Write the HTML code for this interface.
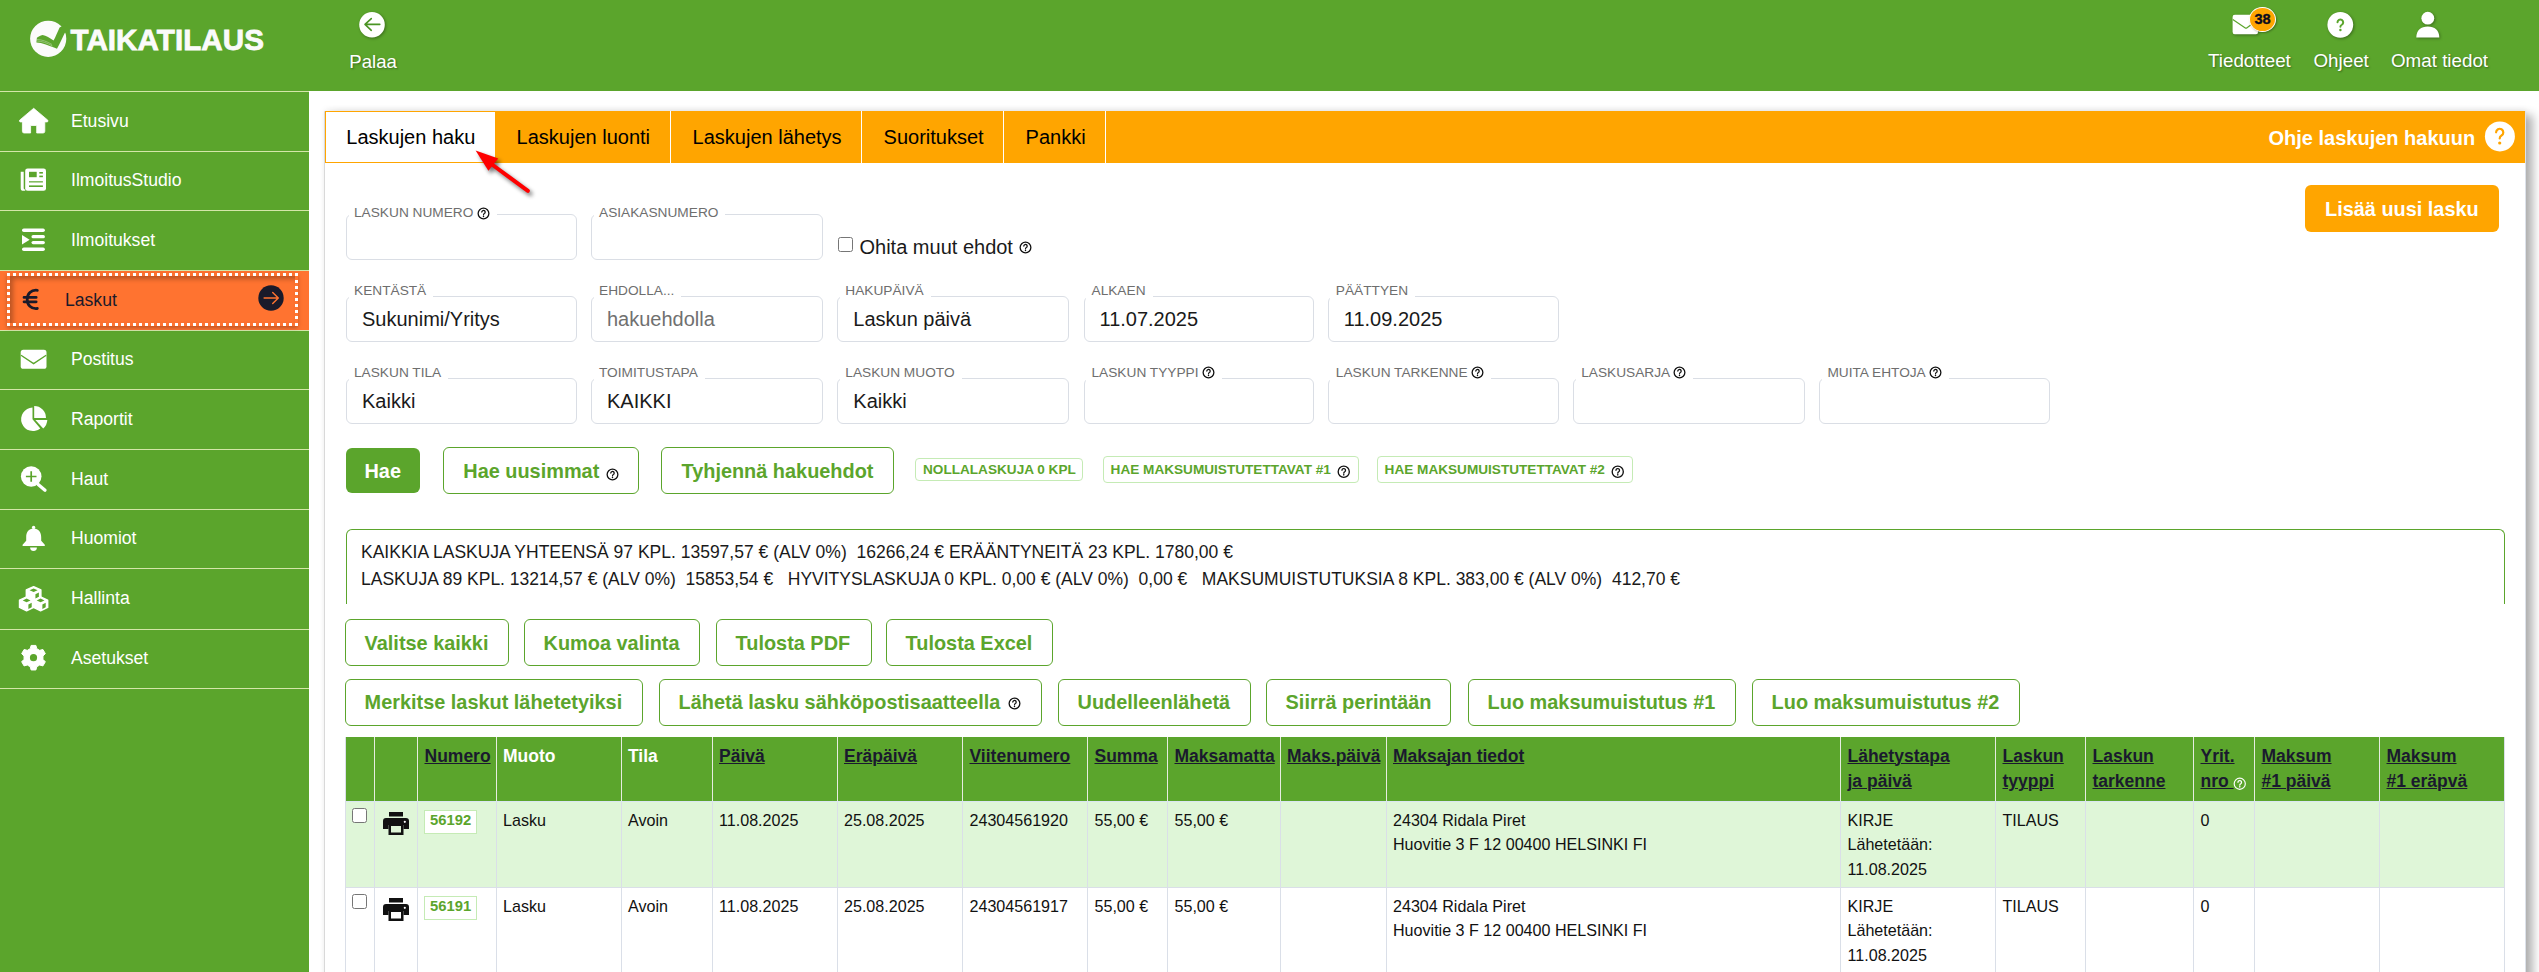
<!DOCTYPE html>
<html><head><meta charset="utf-8">
<style>
*{box-sizing:border-box}
html,body{margin:0;padding:0}
body{width:2539px;height:972px;overflow:hidden;position:relative;background:#fff;font-family:"Liberation Sans",sans-serif;color:#222}
.abs{position:absolute}
.tx{white-space:pre}
#hdr{position:absolute;left:0;top:0;width:2539px;height:91px;background:#5ba52c}
#side{position:absolute;left:0;top:91px;width:309px;height:881px;background:#5ba52c}
.sl{position:absolute;left:0;width:309px;height:1px;background:#d4e6a8}
.hs{text-shadow:1px 1px 2px rgba(0,0,0,.35);color:#fff}
#panel{position:absolute;left:324px;top:111px;width:2202px;height:900px;background:#fff;box-shadow:7px 4px 9px rgba(0,0,0,.3), 0 -2px 6px rgba(0,0,0,.05);border:1px solid #dde2ea;border-left-color:#d9d9d9}
#tabs{position:absolute;left:325px;top:111px;width:2200px;height:51.5px;background:#ffa500;display:flex}
.tab{height:51.5px;line-height:53px;padding:0 0 0 21.4px;font-size:20px;color:#000;border-right:1px solid #fff;white-space:nowrap}
.tab.act{background:#fff;border:1px solid #ffa500;border-right:none;padding-left:20.3px;line-height:51px;width:170.2px}
.fld{position:absolute;width:231px;height:46px;border:1px solid #dadee5;border-radius:6px;background:#fff}
.fld .lb{position:absolute;left:1.5px;top:-14.5px;background:#fff;padding:0 7px 0 5.5px;font-size:13.7px;color:#6e6e6e;line-height:16px;height:16px;white-space:nowrap}
.fld .v{position:absolute;left:15px;top:0;line-height:44px;font-size:20px;color:#1a1a1a;white-space:nowrap}
.fld .v.ph{color:#707070}
.btn{position:absolute;height:46.5px;border:1px solid #5ba52c;border-radius:6px;color:#5ba52c;font-weight:bold;font-size:19.9px;line-height:44.5px;padding:0 19px;white-space:nowrap;background:#fff}
.sbtn{position:absolute;border:1px solid #c5ebb5;border-radius:4px;color:#5ba52c;font-weight:bold;font-size:13.6px;white-space:nowrap;background:#fff}
#sum{position:absolute;left:345.5px;top:529px;width:2159px;height:75px;border:1px solid #5ba52c;border-bottom:none;border-radius:6px 6px 0 0;}
.hl{position:absolute;height:1px;background:#dadfe8}
.vl{position:absolute;width:1px;background:#dadfe8}
.th{font-weight:bold;color:#1a1a2e;text-decoration:underline;text-decoration-thickness:1.2px;text-underline-offset:0.6px}
.td{color:#111}
</style></head><body>
<div id="hdr"></div>
<div id="side"></div>

<svg class="abs" style="left:26px;top:17px" width="46" height="44" viewBox="0 0 46 44">
<circle cx="22.2" cy="21.8" r="18.1" fill="#fbfbfb"/>
<path d="M35.3 9.5 L33.6 10.4 C31.2 15.5 29.6 19.6 27.6 23.6 C24 21 20 18.4 16.6 18 C14.2 18.4 12.2 19.8 10.9 20.7 L10.4 25.6 C16 25.8 23 28.6 31 31.8 C34 26.8 36.2 20.8 38.9 15.8 L42 15 L42 8 Z" fill="#5ba52c"/>
<path d="M11 22.5 C16 22.6 21 24.5 26 27.5 M11 24 C16 24.2 21 26 26.5 29" stroke="#cfe6bd" stroke-width=".6" fill="none" opacity=".8"/>
</svg>
<div class="abs tx " style="left:70.5px;top:25.24px;font-size:29.6px;line-height:29.6px;font-weight:bold;color:#fbfbfb;letter-spacing:0.05px;-webkit-text-stroke:0.8px #fbfbfb;">TAIKATILAUS</div>
<svg class="abs" style="left:358px;top:11px;filter:drop-shadow(1px 1px 1.5px rgba(0,0,0,.35))" width="28" height="28" viewBox="0 0 28 28">
<circle cx="14" cy="13.8" r="12.8" fill="#fff"/>
<path d="M21.8 13.4 H7.2 M13.3 7.6 L7 13.4 L13.3 19.3" stroke="#4a9424" stroke-width="1.6" fill="none" stroke-linecap="round" stroke-linejoin="round"/>
</svg>
<div class="abs tx hs" style="left:349.3px;top:52.56px;font-size:18.6px;line-height:18.6px;">Palaa</div>
<div class="abs tx hs" style="left:2208px;top:52.39px;font-size:18.8px;line-height:18.8px;">Tiedotteet</div>
<div class="abs tx hs" style="left:2313.5px;top:52.39px;font-size:18.8px;line-height:18.8px;">Ohjeet</div>
<div class="abs tx hs" style="left:2391px;top:52.39px;font-size:18.8px;line-height:18.8px;">Omat tiedot</div>
<svg class="abs" style="left:2230px;top:5px;filter:drop-shadow(1px 1px 1.5px rgba(0,0,0,.35))" width="50" height="36" viewBox="0 0 50 36">
<rect x="2.6" y="9.8" width="25.5" height="19.5" rx="2.2" fill="#fff"/>
<path d="M2.8 14.6 L15.3 22.9 Q16 23.4 16.7 22.9 L28 14.6" stroke="#5ba52c" stroke-width="1.2" fill="none"/>
</svg>
<div class="abs" style="left:2248.8px;top:6.8px;width:26.8px;height:25.2px;border-radius:50%;background:#ffa500;border:1px solid #fff;box-shadow:1px 1px 2px rgba(0,0,0,.3)"></div>
<div class="abs tx " style="left:2254.4px;top:11.94px;font-size:14.6px;line-height:14.6px;font-weight:bold;color:#0d0d1e;-webkit-text-stroke:.35px #0d0d1e;">38</div>
<svg class="abs" style="left:2325px;top:10px;filter:drop-shadow(1px 1px 1.5px rgba(0,0,0,.35))" width="32" height="32" viewBox="0 0 32 32">
<circle cx="15.3" cy="14.8" r="12.9" fill="#fff"/>
<path d="M12.5 12.3 a2.85 2.85 0 1 1 4.3 2.45 c-.9 .5 -1.4 1 -1.4 2.1" stroke="#5ba52c" stroke-width="2" fill="none" stroke-linecap="round"/>
<circle cx="15.4" cy="20" r="1.2" fill="#5ba52c"/>
</svg>
<svg class="abs" style="left:2414px;top:10px;filter:drop-shadow(1px 1px 1.5px rgba(0,0,0,.35))" width="30" height="30" viewBox="0 0 30 30">
<circle cx="13.8" cy="8.2" r="6.4" fill="#fff"/>
<path d="M2.3 27.6 C2.3 20 7 16.4 13.8 16.4 C20.6 16.4 25.3 20 25.3 27.6 Z" fill="#fff"/>
</svg>
<div class="sl" style="top:91px"></div>
<div class="sl" style="top:151px"></div>
<div class="sl" style="top:210px"></div>
<div class="sl" style="top:270px"></div>
<div class="sl" style="top:330px"></div>
<div class="sl" style="top:389px"></div>
<div class="sl" style="top:449px"></div>
<div class="sl" style="top:509px"></div>
<div class="sl" style="top:568px"></div>
<div class="sl" style="top:629px"></div>
<div class="sl" style="top:688px"></div>
<div class="abs" style="left:0;top:271px;width:309px;height:59px;background:#ff7330"></div>
<div class="abs" style="left:7px;top:273px;width:290.5px;height:53px;border:3px dotted #fff;box-shadow:inset 3px 3px 5px rgba(0,0,0,.28), 0 2px 4px rgba(0,0,0,.25)"></div>
<div class="abs tx " style="left:71px;top:112.70px;font-size:17.6px;line-height:17.6px;color:#fff;">Etusivu</div>
<div class="abs tx " style="left:71px;top:172.20px;font-size:17.6px;line-height:17.6px;color:#fff;">IlmoitusStudio</div>
<div class="abs tx " style="left:71px;top:231.70px;font-size:17.6px;line-height:17.6px;color:#fff;">Ilmoitukset</div>
<div class="abs tx " style="left:65px;top:291.70px;font-size:17.6px;line-height:17.6px;color:#1a1a2a;">Laskut</div>
<div class="abs tx " style="left:71px;top:351.20px;font-size:17.6px;line-height:17.6px;color:#fff;">Postitus</div>
<div class="abs tx " style="left:71px;top:410.70px;font-size:17.6px;line-height:17.6px;color:#fff;">Raportit</div>
<div class="abs tx " style="left:71px;top:470.70px;font-size:17.6px;line-height:17.6px;color:#fff;">Haut</div>
<div class="abs tx " style="left:71px;top:530.20px;font-size:17.6px;line-height:17.6px;color:#fff;">Huomiot</div>
<div class="abs tx " style="left:71px;top:590.20px;font-size:17.6px;line-height:17.6px;color:#fff;">Hallinta</div>
<div class="abs tx " style="left:71px;top:650.20px;font-size:17.6px;line-height:17.6px;color:#fff;">Asetukset</div>
<svg class="abs" style="left:0;top:91px" width="60" height="600" viewBox="0 91 60 600"><path d="M33.7 108.3 L19.6 120.2 Q18.9 121.6 20.3 121.9 L22.4 121.9 V131.3 Q22.4 133 24.1 133 H30.6 V125.5 H36.7 V133 H43.1 Q44.8 133 44.8 131.3 V121.9 H47.2 Q48.5 121.6 47.8 120.2 Z" fill="#fff" stroke="#fff" stroke-width=".8" stroke-linejoin="round"/><rect x="25.2" y="168.4" width="20.8" height="22.4" rx="2.4" fill="#fff"/><path d="M20.7 171.8 H23.7 V188.2 Q23.7 189.4 25.2 189.6 V190.8 H23.3 Q20.7 190.8 20.7 188.2 Z" fill="#fff"/><rect x="29" y="171.8" width="7.7" height="5.4" fill="#5ba52c"/><rect x="39.3" y="172" width="3.6" height="1.6" fill="#5ba52c"/><rect x="39.3" y="175.6" width="3.6" height="1.6" fill="#5ba52c"/><rect x="29" y="181" width="13.9" height="1.6" fill="#5ba52c" opacity=".75"/><rect x="29" y="185.4" width="13.9" height="1.6" fill="#5ba52c"/><rect x="22" y="228.4" width="22.9" height="3.6" rx="1.8" fill="#fff"/><rect x="31.5" y="235" width="13.4" height="3.3" rx="1.6" fill="#fff"/><rect x="31.5" y="240.9" width="13.4" height="3.4" rx="1.7" fill="#fff"/><rect x="22" y="247.4" width="22.9" height="3.6" rx="1.8" fill="#fff"/><path d="M22 235 L29.6 239.7 L22 244.4 Z" fill="#fff"/><path d="M37.3 290.3 C31 289.6 27.2 294 27.2 299.4 C27.2 304.8 31 309.2 37.3 308.5" stroke="#1a1a2a" stroke-width="2.8" fill="none" stroke-linecap="round"/><path d="M24 297.4 H36.2 M24 301.8 H36.2" stroke="#1a1a2a" stroke-width="2.7" stroke-linecap="round"/><rect x="20.7" y="349.8" width="25.8" height="19" rx="2.6" fill="#fff"/><path d="M21 355.2 L33.6 363.6 L46.2 355.2" stroke="#5ba52c" stroke-width="1.3" fill="none"/><path d="M32.5 407.4 V419.2 L40.3 428.4 A11.8 11.8 0 1 1 32.5 407.4 Z" fill="#fff"/><path d="M34.2 406.1 A11.8 11.8 0 0 1 46 417.9 H34.2 Z" fill="#fff"/><path d="M35.4 420.1 H47.3 A11.9 11.9 0 0 1 43.2 428.6 Z" fill="#fff"/><circle cx="31.2" cy="476.5" r="10.3" fill="#fff"/><path d="M31.2 471.2 V481.8 M25.9 476.5 H36.5" stroke="#5ba52c" stroke-width="1.7"/><path d="M38.2 484.4 L45 490.2" stroke="#fff" stroke-width="3.3" stroke-linecap="round"/><circle cx="33.6" cy="527.4" r="1.7" fill="#fff"/><path d="M33.6 528.6 C28.6 528.6 26.2 532.4 26.2 537.2 V540.8 L22.6 544.8 V546 H44.8 V544.8 L41.2 540.8 V537.2 C41.2 532.4 38.6 528.6 33.6 528.6 Z" fill="#fff"/><path d="M30.1 547.6 H36.9 A3.4 3.4 0 0 1 30.1 547.6 Z" fill="#fff"/><path d="M33.6 586.6 L40.9 589.96 L40.9 597.24 L33.6 600.6 L26.3 597.24 L26.3 589.96 Z" fill="#fff" stroke="#fff" stroke-width="1.4" stroke-linejoin="round"/><path d="M33.6 588.4200000000001 L37.615 590.24 L33.6 592.0600000000001 L29.585 590.24 Z" fill="#5ba52c"/><path d="M35.425000000000004 594.3000000000001 L38.856 592.48 L38.856 597.1 L35.425000000000004 598.9200000000001 Z" fill="#5ba52c"/><path d="M26.6 596.8 L33.7 600.16 L33.7 607.4399999999999 L26.6 610.8 L19.5 607.4399999999999 L19.5 600.16 Z" fill="#fff" stroke="#fff" stroke-width="1.4" stroke-linejoin="round"/><path d="M26.6 598.62 L30.505000000000003 600.4399999999999 L26.6 602.26 L22.695 600.4399999999999 Z" fill="#5ba52c"/><path d="M28.375 604.5 L31.712 602.68 L31.712 607.3 L28.375 609.12 Z" fill="#5ba52c"/><path d="M40.6 596.8 L47.7 600.16 L47.7 607.4399999999999 L40.6 610.8 L33.5 607.4399999999999 L33.5 600.16 Z" fill="#fff" stroke="#fff" stroke-width="1.4" stroke-linejoin="round"/><path d="M40.6 598.62 L44.505 600.4399999999999 L40.6 602.26 L36.695 600.4399999999999 Z" fill="#5ba52c"/><path d="M42.375 604.5 L45.712 602.68 L45.712 607.3 L42.375 609.12 Z" fill="#5ba52c"/><path d="M30.22 648.68 L31.11 645.43 L35.89 645.43 L36.78 648.68 L39.67 650.35 L42.93 649.50 L45.32 653.63 L42.95 656.03 L42.95 659.37 L45.32 661.77 L42.93 665.90 L39.67 665.05 L36.78 666.72 L35.89 669.97 L31.11 669.97 L30.22 666.72 L27.33 665.05 L24.07 665.90 L21.68 661.77 L24.05 659.37 L24.05 656.03 L21.68 653.63 L24.07 649.50 L27.33 650.35 Z" fill="#fff" stroke="#fff" stroke-width="1" stroke-linejoin="round"/><circle cx="33.5" cy="657.7" r="3.6" fill="#5ba52c"/></svg>
<svg class="abs" style="left:258px;top:284.5px" width="26" height="26" viewBox="0 0 26 26"><circle cx="13" cy="13" r="12.7" fill="#1a1a2a"/><path d="M6.1 13 H20.2 M14.7 7.4 L20.3 13 L14.7 18.6" stroke="#ff7330" stroke-width="1.4" fill="none" stroke-linecap="round" stroke-linejoin="round"/></svg>
<div id="panel"></div>
<div id="tabs"><div class="tab act">Laskujen haku</div><div class="tab" style="width:176px">Laskujen luonti</div><div class="tab" style="width:191px">Laskujen lähetys</div><div class="tab" style="width:142px">Suoritukset</div><div class="tab" style="width:102px">Pankki</div></div>
<div class="abs tx " style="left:2268.5px;top:127.87px;font-size:20px;line-height:20px;font-weight:bold;color:#fff;">Ohje laskujen hakuun</div>
<svg class="abs" style="left:2484px;top:121px" width="32" height="32" viewBox="0 0 32 32"><circle cx="15.9" cy="15.4" r="15" fill="#fff"/><path d="M12.1 11.3 a3.6 3.6 0 1 1 5.4 3.2 c-1.2 .7 -1.8 1.3 -1.8 2.9" stroke="#ffa500" stroke-width="2.2" fill="none" stroke-linecap="round"/><circle cx="15.7" cy="22" r="1.6" fill="#ffa500"/></svg>
<svg class="abs" style="left:460px;top:130px;overflow:visible" width="100" height="80" viewBox="0 0 100 80"><defs><filter id="ash" x="-50%" y="-50%" width="200%" height="200%"><feGaussianBlur stdDeviation="2.2"/></filter></defs><g transform="translate(2.5,3)" filter="url(#ash)" opacity=".55"><path d="M30 33 L67.9 60.9" stroke="#000" stroke-width="4" stroke-linecap="round"/><path d="M15.6 20.6 L38.3 28.4 L28.4 40.7 Z" fill="#000"/></g><path d="M30 33 L67.9 60.9" stroke="#fe0000" stroke-width="3.9" stroke-linecap="round"/><path d="M15.6 20.6 L38.3 28.4 L28.4 40.7 Z" fill="#fe0000"/></svg>
<div class="fld" style="left:346px;top:214px;width:230.5px"><div class="lb" style="top:-10.2px">LASKUN NUMERO <svg width="13" height="13" viewBox="0 0 16 16" style="vertical-align:middle"><circle cx="8" cy="8" r="6.6" fill="none" stroke="#111" stroke-width="1.6"/><path d="M5.9 6.3a2.1 2.1 0 1 1 3.2 1.8c-.7.4-1.1.8-1.1 1.6" fill="none" stroke="#111" stroke-width="1.5" stroke-linecap="round"/><circle cx="8" cy="11.7" r=".95" fill="#111"/></svg></div></div>
<div class="fld" style="left:591px;top:214px;width:232px"><div class="lb" style="top:-10.5px">ASIAKASNUMERO</div></div>
<div class="fld" style="left:346px;top:296px;width:230.5px"><div class="lb">KENTÄSTÄ</div><div class="v">Sukunimi/Yritys</div></div>
<div class="fld" style="left:591px;top:296px;width:232px"><div class="lb">EHDOLLA...</div><div class="v ph">hakuehdolla</div></div>
<div class="fld" style="left:837.3px;top:296px;width:231.5px"><div class="lb">HAKUPÄIVÄ</div><div class="v">Laskun päivä</div></div>
<div class="fld" style="left:1083.5px;top:296px;width:230px"><div class="lb">ALKAEN</div><div class="v">11.07.2025</div></div>
<div class="fld" style="left:1327.8px;top:296px;width:231px"><div class="lb">PÄÄTTYEN</div><div class="v">11.09.2025</div></div>
<div class="fld" style="left:346px;top:378px;width:230.5px"><div class="lb">LASKUN TILA</div><div class="v">Kaikki</div></div>
<div class="fld" style="left:591px;top:378px;width:232px"><div class="lb">TOIMITUSTAPA</div><div class="v">KAIKKI</div></div>
<div class="fld" style="left:837.3px;top:378px;width:231.5px"><div class="lb">LASKUN MUOTO</div><div class="v">Kaikki</div></div>
<div class="fld" style="left:1083.5px;top:378px;width:230px"><div class="lb">LASKUN TYYPPI <svg width="13" height="13" viewBox="0 0 16 16" style="vertical-align:middle"><circle cx="8" cy="8" r="6.6" fill="none" stroke="#111" stroke-width="1.6"/><path d="M5.9 6.3a2.1 2.1 0 1 1 3.2 1.8c-.7.4-1.1.8-1.1 1.6" fill="none" stroke="#111" stroke-width="1.5" stroke-linecap="round"/><circle cx="8" cy="11.7" r=".95" fill="#111"/></svg></div></div>
<div class="fld" style="left:1327.8px;top:378px;width:231px"><div class="lb">LASKUN TARKENNE <svg width="13" height="13" viewBox="0 0 16 16" style="vertical-align:middle"><circle cx="8" cy="8" r="6.6" fill="none" stroke="#111" stroke-width="1.6"/><path d="M5.9 6.3a2.1 2.1 0 1 1 3.2 1.8c-.7.4-1.1.8-1.1 1.6" fill="none" stroke="#111" stroke-width="1.5" stroke-linecap="round"/><circle cx="8" cy="11.7" r=".95" fill="#111"/></svg></div></div>
<div class="fld" style="left:1573.2px;top:378px;width:231.5px"><div class="lb">LASKUSARJA <svg width="13" height="13" viewBox="0 0 16 16" style="vertical-align:middle"><circle cx="8" cy="8" r="6.6" fill="none" stroke="#111" stroke-width="1.6"/><path d="M5.9 6.3a2.1 2.1 0 1 1 3.2 1.8c-.7.4-1.1.8-1.1 1.6" fill="none" stroke="#111" stroke-width="1.5" stroke-linecap="round"/><circle cx="8" cy="11.7" r=".95" fill="#111"/></svg></div></div>
<div class="fld" style="left:1819.4px;top:378px;width:230.5px"><div class="lb">MUITA EHTOJA <svg width="13" height="13" viewBox="0 0 16 16" style="vertical-align:middle"><circle cx="8" cy="8" r="6.6" fill="none" stroke="#111" stroke-width="1.6"/><path d="M5.9 6.3a2.1 2.1 0 1 1 3.2 1.8c-.7.4-1.1.8-1.1 1.6" fill="none" stroke="#111" stroke-width="1.5" stroke-linecap="round"/><circle cx="8" cy="11.7" r=".95" fill="#111"/></svg></div></div>
<div class="abs" style="left:838px;top:237px;width:14.5px;height:15px;border:1px solid #767676;border-radius:2.5px;background:#fff"></div>
<div class="abs tx " style="left:859.5px;top:236.67px;font-size:20px;line-height:20px;color:#1a1a1a;">Ohita muut ehdot</div>
<div class="abs" style="left:1019px;top:238.2px"><svg width="13" height="13" viewBox="0 0 16 16" style="vertical-align:middle"><circle cx="8" cy="8" r="6.6" fill="none" stroke="#111" stroke-width="1.6"/><path d="M5.9 6.3a2.1 2.1 0 1 1 3.2 1.8c-.7.4-1.1.8-1.1 1.6" fill="none" stroke="#111" stroke-width="1.5" stroke-linecap="round"/><circle cx="8" cy="11.7" r=".95" fill="#111"/></svg></div>
<div class="abs" style="left:2305px;top:185px;width:194px;height:46.5px;background:#ffa500;border-radius:6px"></div>
<div class="abs tx " style="left:2325px;top:199.75px;font-size:19.9px;line-height:19.9px;font-weight:bold;color:#fff;">Lisää uusi lasku</div>
<div class="abs" style="left:346px;top:448px;width:74px;height:44.5px;background:#5ba52c;border-radius:6px"></div>
<div class="abs tx " style="left:364.5px;top:461.75px;font-size:19.9px;line-height:19.9px;font-weight:bold;color:#fff;">Hae</div>
<div class="btn" style="left:443px;top:447.2px;width:196px;height:46.5px"></div>
<div class="abs tx " style="left:463.3px;top:461.75px;font-size:19.9px;line-height:19.9px;font-weight:bold;color:#5ba52c;">Hae uusimmat</div>
<div class="abs" style="left:606px;top:464.5px"><svg width="13" height="13" viewBox="0 0 16 16" style="vertical-align:middle"><circle cx="8" cy="8" r="6.6" fill="none" stroke="#111" stroke-width="1.6"/><path d="M5.9 6.3a2.1 2.1 0 1 1 3.2 1.8c-.7.4-1.1.8-1.1 1.6" fill="none" stroke="#111" stroke-width="1.5" stroke-linecap="round"/><circle cx="8" cy="11.7" r=".95" fill="#111"/></svg></div>
<div class="btn" style="left:661px;top:447.2px;width:233px;height:46.5px"></div>
<div class="abs tx " style="left:681.5px;top:461.75px;font-size:19.9px;line-height:19.9px;font-weight:bold;color:#5ba52c;">Tyhjennä hakuehdot</div>
<div class="sbtn" style="left:915.3px;top:457.6px;width:168.2px;height:23.8px"></div>
<div class="abs tx " style="left:923px;top:462.69px;font-size:13.6px;line-height:13.6px;font-weight:bold;color:#5ba52c;">NOLLALASKUJA 0 KPL</div>
<div class="sbtn" style="left:1103.4px;top:456.3px;width:255.5px;height:26.3px"></div>
<div class="abs tx " style="left:1110.6px;top:462.69px;font-size:13.6px;line-height:13.6px;font-weight:bold;color:#5ba52c;">HAE MAKSUMUISTUTETTAVAT #1</div>
<div class="abs" style="left:1336.5px;top:462px"><svg width="13.5" height="13.5" viewBox="0 0 16 16" style="vertical-align:middle"><circle cx="8" cy="8" r="6.6" fill="none" stroke="#111" stroke-width="1.6"/><path d="M5.9 6.3a2.1 2.1 0 1 1 3.2 1.8c-.7.4-1.1.8-1.1 1.6" fill="none" stroke="#111" stroke-width="1.5" stroke-linecap="round"/><circle cx="8" cy="11.7" r=".95" fill="#111"/></svg></div>
<div class="sbtn" style="left:1377.4px;top:456.3px;width:255.5px;height:26.3px"></div>
<div class="abs tx " style="left:1384.6px;top:462.69px;font-size:13.6px;line-height:13.6px;font-weight:bold;color:#5ba52c;">HAE MAKSUMUISTUTETTAVAT #2</div>
<div class="abs" style="left:1610.5px;top:462px"><svg width="13.5" height="13.5" viewBox="0 0 16 16" style="vertical-align:middle"><circle cx="8" cy="8" r="6.6" fill="none" stroke="#111" stroke-width="1.6"/><path d="M5.9 6.3a2.1 2.1 0 1 1 3.2 1.8c-.7.4-1.1.8-1.1 1.6" fill="none" stroke="#111" stroke-width="1.5" stroke-linecap="round"/><circle cx="8" cy="11.7" r=".95" fill="#111"/></svg></div>
<div id="sum"></div>
<div class="abs tx " style="left:361px;top:544.09px;font-size:17.5px;line-height:17.5px;color:#1a1a1a;">KAIKKIA LASKUJA YHTEENSÄ 97 KPL. 13597,57 € (ALV 0%)  16266,24 € ERÄÄNTYNEITÄ 23 KPL. 1780,00 €</div>
<div class="abs tx " style="left:361px;top:570.69px;font-size:17.5px;line-height:17.5px;color:#1a1a1a;">LASKUJA 89 KPL. 13214,57 € (ALV 0%)  15853,54 €   HYVITYSLASKUJA 0 KPL. 0,00 € (ALV 0%)  0,00 €   MAKSUMUISTUTUKSIA 8 KPL. 383,00 € (ALV 0%)  412,70 €</div>
<div class="btn" style="left:345px;top:619.2px;width:164px;height:46.5px"></div>
<div class="abs tx " style="left:364.6px;top:633.55px;font-size:19.9px;line-height:19.9px;font-weight:bold;color:#5ba52c;">Valitse kaikki</div>
<div class="btn" style="left:524px;top:619.2px;width:176px;height:46.5px"></div>
<div class="abs tx " style="left:543.6px;top:633.55px;font-size:19.9px;line-height:19.9px;font-weight:bold;color:#5ba52c;">Kumoa valinta</div>
<div class="btn" style="left:716px;top:619.2px;width:155.5px;height:46.5px"></div>
<div class="abs tx " style="left:735.6px;top:633.55px;font-size:19.9px;line-height:19.9px;font-weight:bold;color:#5ba52c;">Tulosta PDF</div>
<div class="btn" style="left:886px;top:619.2px;width:167px;height:46.5px"></div>
<div class="abs tx " style="left:905.6px;top:633.55px;font-size:19.9px;line-height:19.9px;font-weight:bold;color:#5ba52c;">Tulosta Excel</div>
<div class="btn" style="left:345px;top:679px;width:298px;height:46.5px"></div>
<div class="abs tx " style="left:364.6px;top:692.95px;font-size:19.9px;line-height:19.9px;font-weight:bold;color:#5ba52c;">Merkitse laskut lähetetyiksi</div>
<div class="btn" style="left:659px;top:679px;width:383px;height:46.5px"></div>
<div class="abs tx " style="left:678.6px;top:692.95px;font-size:19.9px;line-height:19.9px;font-weight:bold;color:#5ba52c;">Lähetä lasku sähköpostisaatteella</div>
<div class="btn" style="left:1058px;top:679px;width:193px;height:46.5px"></div>
<div class="abs tx " style="left:1077.6px;top:692.95px;font-size:19.9px;line-height:19.9px;font-weight:bold;color:#5ba52c;">Uudelleenlähetä</div>
<div class="btn" style="left:1266px;top:679px;width:184.5px;height:46.5px"></div>
<div class="abs tx " style="left:1285.6px;top:692.95px;font-size:19.9px;line-height:19.9px;font-weight:bold;color:#5ba52c;">Siirrä perintään</div>
<div class="btn" style="left:1468px;top:679px;width:268px;height:46.5px"></div>
<div class="abs tx " style="left:1487.6px;top:692.95px;font-size:19.9px;line-height:19.9px;font-weight:bold;color:#5ba52c;">Luo maksumuistutus #1</div>
<div class="btn" style="left:1752px;top:679px;width:268px;height:46.5px"></div>
<div class="abs tx " style="left:1771.6px;top:692.95px;font-size:19.9px;line-height:19.9px;font-weight:bold;color:#5ba52c;">Luo maksumuistutus #2</div>
<div class="abs" style="left:1008px;top:694px"><svg width="13" height="13" viewBox="0 0 16 16" style="vertical-align:middle"><circle cx="8" cy="8" r="6.6" fill="none" stroke="#111" stroke-width="1.6"/><path d="M5.9 6.3a2.1 2.1 0 1 1 3.2 1.8c-.7.4-1.1.8-1.1 1.6" fill="none" stroke="#111" stroke-width="1.5" stroke-linecap="round"/><circle cx="8" cy="11.7" r=".95" fill="#111"/></svg></div>
<div class="abs" style="left:346px;top:737px;width:2158.5px;height:64px;background:#5ba52c"></div>
<div class="abs" style="left:346px;top:801px;width:2158.5px;height:86px;background:#dff6d8"></div>
<div class="vl" style="left:345.0px;top:737px;height:235px;background:#dadfe8"></div>
<div class="vl" style="left:374.0px;top:737px;height:235px;background:#dadfe8"></div>
<div class="vl" style="left:417.0px;top:737px;height:235px;background:#dadfe8"></div>
<div class="vl" style="left:495.5px;top:737px;height:235px;background:#dadfe8"></div>
<div class="vl" style="left:620.5px;top:737px;height:235px;background:#dadfe8"></div>
<div class="vl" style="left:711.5px;top:737px;height:235px;background:#dadfe8"></div>
<div class="vl" style="left:836.5px;top:737px;height:235px;background:#dadfe8"></div>
<div class="vl" style="left:962.0px;top:737px;height:235px;background:#dadfe8"></div>
<div class="vl" style="left:1087.0px;top:737px;height:235px;background:#dadfe8"></div>
<div class="vl" style="left:1167.0px;top:737px;height:235px;background:#dadfe8"></div>
<div class="vl" style="left:1279.5px;top:737px;height:235px;background:#dadfe8"></div>
<div class="vl" style="left:1385.5px;top:737px;height:235px;background:#dadfe8"></div>
<div class="vl" style="left:1840.0px;top:737px;height:235px;background:#dadfe8"></div>
<div class="vl" style="left:1995.0px;top:737px;height:235px;background:#dadfe8"></div>
<div class="vl" style="left:2085.0px;top:737px;height:235px;background:#dadfe8"></div>
<div class="vl" style="left:2193.0px;top:737px;height:235px;background:#dadfe8"></div>
<div class="vl" style="left:2254.0px;top:737px;height:235px;background:#dadfe8"></div>
<div class="vl" style="left:2379.0px;top:737px;height:235px;background:#dadfe8"></div>
<div class="vl" style="left:2504.0px;top:737px;height:235px;background:#dadfe8"></div>
<div class="vl" style="left:374.0px;top:737px;height:64px;background:#e6ece0"></div>
<div class="vl" style="left:417.0px;top:737px;height:64px;background:#e6ece0"></div>
<div class="vl" style="left:495.5px;top:737px;height:64px;background:#e6ece0"></div>
<div class="vl" style="left:620.5px;top:737px;height:64px;background:#e6ece0"></div>
<div class="vl" style="left:711.5px;top:737px;height:64px;background:#e6ece0"></div>
<div class="vl" style="left:836.5px;top:737px;height:64px;background:#e6ece0"></div>
<div class="vl" style="left:962.0px;top:737px;height:64px;background:#e6ece0"></div>
<div class="vl" style="left:1087.0px;top:737px;height:64px;background:#e6ece0"></div>
<div class="vl" style="left:1167.0px;top:737px;height:64px;background:#e6ece0"></div>
<div class="vl" style="left:1279.5px;top:737px;height:64px;background:#e6ece0"></div>
<div class="vl" style="left:1385.5px;top:737px;height:64px;background:#e6ece0"></div>
<div class="vl" style="left:1840.0px;top:737px;height:64px;background:#e6ece0"></div>
<div class="vl" style="left:1995.0px;top:737px;height:64px;background:#e6ece0"></div>
<div class="vl" style="left:2085.0px;top:737px;height:64px;background:#e6ece0"></div>
<div class="vl" style="left:2193.0px;top:737px;height:64px;background:#e6ece0"></div>
<div class="vl" style="left:2254.0px;top:737px;height:64px;background:#e6ece0"></div>
<div class="vl" style="left:2379.0px;top:737px;height:64px;background:#e6ece0"></div>
<div class="hl" style="left:346px;top:800.5px;width:2158.5px;background:#dae6f2"></div>
<div class="hl" style="left:346px;top:886.5px;width:2158.5px"></div>
<div class="abs tx th" style="left:424.5px;top:747.79px;font-size:17.5px;line-height:17.5px;">Numero</div>
<div class="abs tx " style="left:503px;top:747.79px;font-size:17.5px;line-height:17.5px;font-weight:bold;color:#fff;">Muoto</div>
<div class="abs tx " style="left:628px;top:747.79px;font-size:17.5px;line-height:17.5px;font-weight:bold;color:#fff;">Tila</div>
<div class="abs tx th" style="left:719px;top:747.79px;font-size:17.5px;line-height:17.5px;">Päivä</div>
<div class="abs tx th" style="left:844px;top:747.79px;font-size:17.5px;line-height:17.5px;">Eräpäivä</div>
<div class="abs tx th" style="left:969.5px;top:747.79px;font-size:17.5px;line-height:17.5px;">Viitenumero</div>
<div class="abs tx th" style="left:1094.5px;top:747.79px;font-size:17.5px;line-height:17.5px;">Summa</div>
<div class="abs tx th" style="left:1174.5px;top:747.79px;font-size:17.5px;line-height:17.5px;">Maksamatta</div>
<div class="abs tx th" style="left:1287px;top:747.79px;font-size:17.5px;line-height:17.5px;">Maks.päivä</div>
<div class="abs tx th" style="left:1393px;top:747.79px;font-size:17.5px;line-height:17.5px;">Maksajan tiedot</div>
<div class="abs tx th" style="left:1847.5px;top:747.79px;font-size:17.5px;line-height:17.5px;">Lähetystapa</div>
<div class="abs tx th" style="left:1847.5px;top:773.39px;font-size:17.5px;line-height:17.5px;">ja päivä</div>
<div class="abs tx th" style="left:2002.5px;top:747.79px;font-size:17.5px;line-height:17.5px;">Laskun</div>
<div class="abs tx th" style="left:2002.5px;top:773.39px;font-size:17.5px;line-height:17.5px;">tyyppi</div>
<div class="abs tx th" style="left:2092.5px;top:747.79px;font-size:17.5px;line-height:17.5px;">Laskun</div>
<div class="abs tx th" style="left:2092.5px;top:773.39px;font-size:17.5px;line-height:17.5px;">tarkenne</div>
<div class="abs tx th" style="left:2200.5px;top:747.79px;font-size:17.5px;line-height:17.5px;">Yrit.</div>
<div class="abs tx th" style="left:2200.5px;top:773.39px;font-size:17.5px;line-height:17.5px;">nro </div>
<div class="abs tx th" style="left:2261.5px;top:747.79px;font-size:17.5px;line-height:17.5px;">Maksum</div>
<div class="abs tx th" style="left:2261.5px;top:773.39px;font-size:17.5px;line-height:17.5px;">#1 päivä</div>
<div class="abs tx th" style="left:2386.5px;top:747.79px;font-size:17.5px;line-height:17.5px;">Maksum</div>
<div class="abs tx th" style="left:2386.5px;top:773.39px;font-size:17.5px;line-height:17.5px;">#1 eräpvä</div>
<div class="abs" style="left:2232.5px;top:774.3px"><svg width="13.5" height="13.5" viewBox="0 0 16 16" style="vertical-align:middle"><circle cx="8" cy="8" r="6.6" fill="none" stroke="#fff" stroke-width="1.4"/><path d="M5.9 6.3a2.1 2.1 0 1 1 3.2 1.8c-.7.4-1.1.8-1.1 1.6" fill="none" stroke="#fff" stroke-width="1.5" stroke-linecap="round"/><circle cx="8" cy="11.7" r=".95" fill="#fff"/></svg></div>
<div class="abs" style="left:352.2px;top:808.2px;width:14.6px;height:14.6px;border:1px solid #767676;border-radius:2.5px;background:#fff"></div>
<svg class="abs" style="left:383px;top:811.5px" width="26" height="23" viewBox="0 0 26 23"><rect x="6" y="0" width="14" height="4.5" fill="#111"/><path d="M3 6 H23 a3 3 0 0 1 3 3 V17 H20.5 V13 H5.5 V17 H0 V9 a3 3 0 0 1 3 -3 Z" fill="#111"/><rect x="5.5" y="12" width="15" height="11" fill="#111"/><rect x="8" y="14" width="10" height="6.5" fill="#dff6d8"/><circle cx="21.8" cy="9.8" r="1.1" fill="#fff"/></svg>
<div class="abs" style="left:424.3px;top:810px;width:52.5px;height:23.5px;border:1px solid #c5ebb5;background:#fff"></div>
<div class="abs tx " style="left:430px;top:813.47px;font-size:14.8px;line-height:14.8px;font-weight:bold;color:#5ba52c;">56192</div>
<div class="abs tx td" style="left:503px;top:811.97px;font-size:16.1px;line-height:16.1px;">Lasku</div>
<div class="abs tx td" style="left:628px;top:811.97px;font-size:16.1px;line-height:16.1px;">Avoin</div>
<div class="abs tx td" style="left:719px;top:811.97px;font-size:16.1px;line-height:16.1px;">11.08.2025</div>
<div class="abs tx td" style="left:844px;top:811.97px;font-size:16.1px;line-height:16.1px;">25.08.2025</div>
<div class="abs tx td" style="left:969.5px;top:811.97px;font-size:16.1px;line-height:16.1px;">24304561920</div>
<div class="abs tx td" style="left:1094.5px;top:811.97px;font-size:16.1px;line-height:16.1px;">55,00 €</div>
<div class="abs tx td" style="left:1174.5px;top:811.97px;font-size:16.1px;line-height:16.1px;">55,00 €</div>
<div class="abs tx td" style="left:1393px;top:811.97px;font-size:16.1px;line-height:16.1px;">24304 Ridala Piret</div>
<div class="abs tx td" style="left:1393px;top:836.47px;font-size:16.1px;line-height:16.1px;">Huovitie 3 F 12 00400 HELSINKI FI</div>
<div class="abs tx td" style="left:1847.5px;top:811.97px;font-size:16.1px;line-height:16.1px;">KIRJE</div>
<div class="abs tx td" style="left:1847.5px;top:836.47px;font-size:16.1px;line-height:16.1px;">Lähetetään:</div>
<div class="abs tx td" style="left:1847.5px;top:860.97px;font-size:16.1px;line-height:16.1px;">11.08.2025</div>
<div class="abs tx td" style="left:2002.5px;top:811.97px;font-size:16.1px;line-height:16.1px;">TILAUS</div>
<div class="abs tx td" style="left:2200.5px;top:811.97px;font-size:16.1px;line-height:16.1px;">0</div>
<div class="abs" style="left:352.2px;top:894.2px;width:14.6px;height:14.6px;border:1px solid #767676;border-radius:2.5px;background:#fff"></div>
<svg class="abs" style="left:383px;top:897.5px" width="26" height="23" viewBox="0 0 26 23"><rect x="6" y="0" width="14" height="4.5" fill="#111"/><path d="M3 6 H23 a3 3 0 0 1 3 3 V17 H20.5 V13 H5.5 V17 H0 V9 a3 3 0 0 1 3 -3 Z" fill="#111"/><rect x="5.5" y="12" width="15" height="11" fill="#111"/><rect x="8" y="14" width="10" height="6.5" fill="#fff"/><circle cx="21.8" cy="9.8" r="1.1" fill="#fff"/></svg>
<div class="abs" style="left:424.3px;top:896px;width:52.5px;height:23.5px;border:1px solid #c5ebb5;background:#fff"></div>
<div class="abs tx " style="left:430px;top:899.47px;font-size:14.8px;line-height:14.8px;font-weight:bold;color:#5ba52c;">56191</div>
<div class="abs tx td" style="left:503px;top:897.97px;font-size:16.1px;line-height:16.1px;">Lasku</div>
<div class="abs tx td" style="left:628px;top:897.97px;font-size:16.1px;line-height:16.1px;">Avoin</div>
<div class="abs tx td" style="left:719px;top:897.97px;font-size:16.1px;line-height:16.1px;">11.08.2025</div>
<div class="abs tx td" style="left:844px;top:897.97px;font-size:16.1px;line-height:16.1px;">25.08.2025</div>
<div class="abs tx td" style="left:969.5px;top:897.97px;font-size:16.1px;line-height:16.1px;">24304561917</div>
<div class="abs tx td" style="left:1094.5px;top:897.97px;font-size:16.1px;line-height:16.1px;">55,00 €</div>
<div class="abs tx td" style="left:1174.5px;top:897.97px;font-size:16.1px;line-height:16.1px;">55,00 €</div>
<div class="abs tx td" style="left:1393px;top:897.97px;font-size:16.1px;line-height:16.1px;">24304 Ridala Piret</div>
<div class="abs tx td" style="left:1393px;top:922.47px;font-size:16.1px;line-height:16.1px;">Huovitie 3 F 12 00400 HELSINKI FI</div>
<div class="abs tx td" style="left:1847.5px;top:897.97px;font-size:16.1px;line-height:16.1px;">KIRJE</div>
<div class="abs tx td" style="left:1847.5px;top:922.47px;font-size:16.1px;line-height:16.1px;">Lähetetään:</div>
<div class="abs tx td" style="left:1847.5px;top:946.97px;font-size:16.1px;line-height:16.1px;">11.08.2025</div>
<div class="abs tx td" style="left:2002.5px;top:897.97px;font-size:16.1px;line-height:16.1px;">TILAUS</div>
<div class="abs tx td" style="left:2200.5px;top:897.97px;font-size:16.1px;line-height:16.1px;">0</div>
</body></html>
